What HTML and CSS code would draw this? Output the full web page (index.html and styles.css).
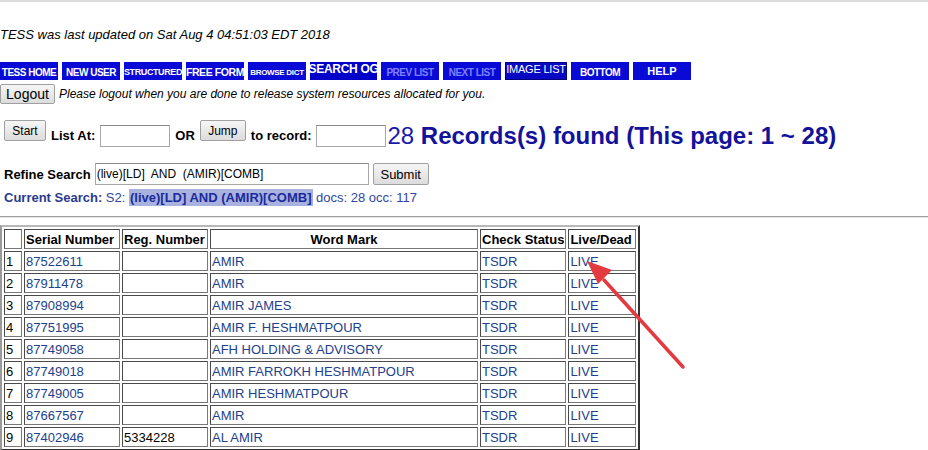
FILE: index.html
```html
<!DOCTYPE html>
<html lang="en">
<head>
  <meta charset="UTF-8">
  <title>TESS - Records found</title>
  <link rel="stylesheet" href="styles.css">
</head>
<body>
  <div class="topline"></div>
  <div class="updated">TESS was last updated on Sat Aug 4 04:51:03 EDT 2018</div>

  <div class="nav">
    <a class="nbtn sc">Tess Home</a>
    <a class="nbtn sc">New User</a>
    <a class="nbtn sc mid">Structured</a>
    <a class="nbtn sc big">Free Form</a>
    <a class="nbtn sc tiny">Browse Dict</a>
    <a class="nbtn og">SEARCH OG</a>
    <a class="nbtn sc off">Prev List</a>
    <a class="nbtn sc off">Next List</a>
    <a class="nbtn img">IMAGE LIST</a>
    <a class="nbtn sc">Bottom</a>
    <a class="nbtn help">HELP</a>
  </div>

  <div class="logout-row">
    <button class="btn logout">Logout</button>
    <span class="note">Please logout when you are done to release system resources allocated for you.</span>
  </div>

  <div class="list-row">
    <button class="btn small">Start</button>
    <b class="lbl">List At:</b>
    <input class="box" type="text">
    <b class="lbl">OR</b>
    <button class="btn small jump">Jump</button>
    <b class="lbl">to record:</b>
    <input class="box" type="text">
    <span class="found"><span class="num">28</span> <b>Records(s) found (This page: 1 ~ 28)</b></span>
  </div>

  <div class="refine-row">
    <b class="lbl">Refine Search</b>
    <input class="query" type="text" value="(live)[LD]  AND  (AMIR)[COMB]">
    <button class="btn submit">Submit</button>
  </div>

  <div class="current">
    <b>Current Search:</b> S2: <span class="hl">(live)[LD] AND (AMIR)[COMB]</span> docs: 28 occ: 117
  </div>

  <hr class="rule">

  <table class="results">
    <tr>
      <th class="c-num"></th>
      <th class="c-serial">Serial Number</th>
      <th class="c-reg">Reg. Number</th>
      <th class="c-mark">Word Mark</th>
      <th class="c-status">Check Status</th>
      <th class="c-ld">Live/Dead</th>
    </tr>
    <tr><td>1</td><td><a>87522611</a></td><td></td><td><a>AMIR</a></td><td><a>TSDR</a></td><td><a>LIVE</a></td></tr>
    <tr><td>2</td><td><a>87911478</a></td><td></td><td><a>AMIR</a></td><td><a>TSDR</a></td><td><a>LIVE</a></td></tr>
    <tr><td>3</td><td><a>87908994</a></td><td></td><td><a>AMIR JAMES</a></td><td><a>TSDR</a></td><td><a>LIVE</a></td></tr>
    <tr><td>4</td><td><a>87751995</a></td><td></td><td><a>AMIR F. HESHMATPOUR</a></td><td><a>TSDR</a></td><td><a>LIVE</a></td></tr>
    <tr><td>5</td><td><a>87749058</a></td><td></td><td><a>AFH HOLDING &amp; ADVISORY</a></td><td><a>TSDR</a></td><td><a>LIVE</a></td></tr>
    <tr><td>6</td><td><a>87749018</a></td><td></td><td><a>AMIR FARROKH HESHMATPOUR</a></td><td><a>TSDR</a></td><td><a>LIVE</a></td></tr>
    <tr><td>7</td><td><a>87749005</a></td><td></td><td><a>AMIR HESHMATPOUR</a></td><td><a>TSDR</a></td><td><a>LIVE</a></td></tr>
    <tr><td>8</td><td><a>87667567</a></td><td></td><td><a>AMIR</a></td><td><a>TSDR</a></td><td><a>LIVE</a></td></tr>
    <tr><td>9</td><td><a>87402946</a></td><td>5334228</td><td><a>AL AMIR</a></td><td><a>TSDR</a></td><td><a>LIVE</a></td></tr>
  </table>

  <!-- annotation arrow drawn over the screenshot -->
  <svg class="arrow" width="120" height="120" viewBox="0 0 120 120">
    <path d="M103 111 L24 24" stroke="#e3393f" stroke-width="3.5" stroke-linecap="round"/>
    <path d="M7 5 L32 14 L18 28 Z" fill="#e3393f"/>
  </svg>
</body>
</html>
```

FILE: styles.css
```css
body {
  margin: 0;
  background: #fff;
  color: #000;
  font-family: "Liberation Sans", Arial, sans-serif;
  font-size: 13px;
  position: relative;
}
.topline {
  height: 2px;
  background: #dcdcdc;
}
.updated {
  font-style: italic;
  font-size: 13px;
  line-height: 16px;
  margin-top: 25px;
}

/* nav buttons */
.nav {
  display: flex;
  gap: 4px;
  margin-top: 19px;
  height: 18px;
}
.nbtn {
  display: flex;
  align-items: center;
  justify-content: center;
  width: 58px;
  height: 18px;
  background: #0a0ad6;
  color: #fff;
  font-weight: bold;
  font-size: 11px;
  white-space: nowrap;
  overflow: hidden;
}
.sc {
  text-transform: uppercase;
  font-size: 10px;
  letter-spacing: -0.5px;
  padding-top: 2px;
  box-sizing: border-box;
}
.sc.mid {
  font-size: 9px;
  letter-spacing: -0.4px;
}
.sc.big {
  font-size: 10.5px;
  letter-spacing: -0.4px;
}
.sc.tiny {
  font-size: 8px;
  letter-spacing: -0.3px;
}
.og {
  width: 67px;
  font-size: 12px;
  letter-spacing: -0.3px;
  background: #0000c8;
  align-items: flex-start;
}
.off {
  color: #8080ff;
}
.img {
  width: 62px;
  font-weight: normal;
  font-size: 11px;
  letter-spacing: -0.2px;
  background: #0808c4;
  border: 1px solid #00007a;
  box-sizing: border-box;
  align-items: flex-start;
}
.help {
  font-size: 11px;
}

/* buttons and inputs */
.btn {
  font-family: "Liberation Sans", Arial, sans-serif;
  background: linear-gradient(#f6f6f6, #dcdcdc);
  border: 1px solid #a0a0a0;
  border-radius: 2px;
  color: #000;
  padding: 0;
  margin: 0;
}
.logout-row {
  display: flex;
  align-items: center;
  margin-top: 4px;
  height: 20px;
}
.logout {
  width: 55px;
  height: 20px;
  font-size: 14px;
}
.note {
  font-style: italic;
  font-size: 12px;
  margin-left: 4px;
}
.list-row {
  display: flex;
  align-items: flex-start;
  margin-top: 16px;
  padding-left: 4px;
  height: 28px;
}
.small {
  width: 42px;
  height: 21px;
  font-size: 12px;
}
.jump {
  width: 46px;
}
.lbl {
  font-size: 13px;
  margin: 8px 5px 0 5px;
}
.box {
  width: 70px;
  height: 22px;
  box-sizing: border-box;
  border: 1px solid #a8a8a8;
  border-top-color: #888;
  margin: 5px 0 0 0;
  padding: 0;
}
.found {
  color: #12129a;
  font-size: 24px;
  margin: 2px 0 0 1px;
  white-space: nowrap;
}
.num {
  color: #1a1aa8;
}
.refine-row {
  display: flex;
  align-items: center;
  margin-top: 15px;
  padding-left: 4px;
  height: 22px;
}
.refine-row .lbl {
  margin: 0 4px 0 0;
}
.query {
  width: 274px;
  height: 22px;
  box-sizing: border-box;
  border: 1px solid #a8a8a8;
  border-top-color: #888;
  font-family: "Liberation Sans", Arial, sans-serif;
  font-size: 12px;
  padding: 0 1px;
  margin: 0;
}
.submit {
  width: 56px;
  height: 22px;
  font-size: 13px;
  margin-left: 4px;
}
.current {
  margin-top: 4px;
  padding-left: 4px;
  height: 18px;
  line-height: 18px;
  font-size: 13px;
  color: #3344a0;
}
.current b {
  color: #2a3a90;
}
.hl {
  background: #a9b2de;
  color: #1a2a9c;
  font-weight: bold;
  padding: 1px 1px;
}
.rule {
  margin: 9px 0 0 0;
  border: 0;
  border-top: 1px solid #a0a0a0;
  border-bottom: 1px solid #e4e4e4;
}

/* results table */
.results {
  margin-top: 7px;
  border-collapse: separate;
  border-spacing: 2px;
  border: 2px solid;
  border-color: #b8b8b8 #333 #333 #9a9a9a;
  font-size: 13px;
}
.results th,
.results td {
  border: 1px solid #4a4a4a;
  border-right-color: #777;
  border-bottom-color: #777;
  height: 20px;
  box-sizing: border-box;
  padding: 0 1px;
  text-align: left;
  white-space: nowrap;
}
.results th {
  font-weight: bold;
}
.results a {
  color: #22418c;
  text-decoration: none;
}
.c-num { width: 18px; }
.c-serial { width: 96px; }
.c-reg { width: 86px; }
.results .c-mark { width: 268px; text-align: center; }
.c-status { width: 86px; }
.c-ld { width: 68px; }

.arrow {
  position: absolute;
  left: 580px;
  top: 256px;
}
```
